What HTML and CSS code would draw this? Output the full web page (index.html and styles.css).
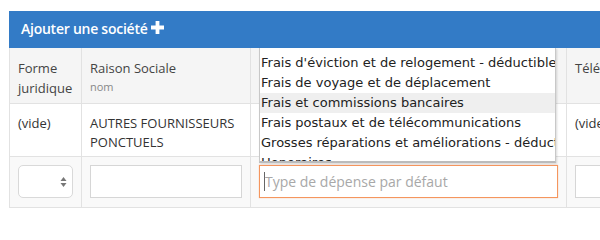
FILE: index.html
```html
<!DOCTYPE html>
<html lang="fr">
<head>
<meta charset="utf-8">
<link rel="stylesheet" href="styles.css">
</head>
<body>
<div class="panel">
  <div class="panel-head">Ajouter une société <svg class="plus" width="13" height="13" viewBox="0 0 13 13"><path d="M4.6 0h3.8v4.6H13v3.8H8.4V13H4.6V8.4H0V4.6h4.6z" fill="#fff"/></svg></div>
  <div class="table-wrap">
    <table class="grid">
      <colgroup>
        <col class="c1"><col class="c2"><col class="c3"><col class="c4">
      </colgroup>
      <thead>
        <tr>
          <th>Forme juridique</th>
          <th>Raison Sociale<span class="sub">nom</span></th>
          <th></th>
          <th>Téléphone</th>
        </tr>
      </thead>
      <tbody>
        <tr class="data">
          <td>(vide)</td>
          <td>AUTRES FOURNISSEURS PONCTUELS</td>
          <td></td>
          <td>(vide)</td>
        </tr>
        <tr class="edit">
          <td><div class="select"><span class="arrows"><svg width="7" height="12" viewBox="0 0 7 12"><path d="M3.5 1L6.5 5H0.5z M3.5 11L0.5 7H6.5z" fill="#777"/></svg></span></div></td>
          <td><div class="input"></div></td>
          <td><div class="input focus"><span class="caret"></span><span class="ph">Type de dépense par défaut</span></div></td>
          <td><div class="input"></div></td>
        </tr>
      </tbody>
    </table>
    <div class="dropdown">
      <div class="opt">Frais d'éviction et de relogement - déductible</div>
      <div class="opt">Frais de voyage et de déplacement</div>
      <div class="opt hl">Frais et commissions bancaires</div>
      <div class="opt">Frais postaux et de télécommunications</div>
      <div class="opt">Grosses réparations et améliorations - déductible</div>
      <div class="opt">Honoraires</div>
    </div>
  </div>
</div>
</body>
</html>
```

FILE: styles.css
```css
html, body {
  margin: 0;
  padding: 0;
  background: #fff;
  overflow: hidden;
}
body {
  width: 600px;
  height: 220px;
  font-family: "Open Sans", "DejaVu Sans", sans-serif;
  color: #333;
}
.panel {
  margin: 11px 0 0 9px;
  width: 700px;
}
.panel-head {
  background: #337bc6;
  color: #fff;
  height: 37px;
  box-sizing: border-box;
  padding: 0 0 2px 12px;
  font-size: 14px;
  font-weight: 600;
  letter-spacing: -0.25px;
  display: flex;
  align-items: center;
  line-height: 20px;
}
.plus {
  margin-left: 3px;
  margin-top: -3px;
}
.table-wrap {
  position: relative;
}
.grid {
  border-collapse: collapse;
  table-layout: fixed;
  width: 700px;
  font-size: 13px;
}
.c1 { width: 72px; }
.c2 { width: 169px; }
.c3 { width: 316px; }
.c4 { width: 143px; }
.grid th, .grid td {
  border: 1px solid #e2e2e2;
  padding: 0 8px;
  text-align: left;
  vertical-align: top;
  line-height: 19px;
}
.grid th {
  background: #f5f5f5;
  font-weight: 400;
  height: 55px;
  padding-top: 10px;
  line-height: 20px;
  box-sizing: border-box;
  color: #444;
}
.grid tr:first-child th { border-top: none; }
.sub {
  display: block;
  font-size: 11px;
  color: #888;
  margin-top: -1px;
}
.data td {
  height: 53px;
  box-sizing: border-box;
  padding-top: 10px;
  color: #333;
}
.edit td {
  background: #f9f9f9;
  height: 51px;
  box-sizing: border-box;
  padding-top: 8px;
}
.select {
  width: 55px;
  height: 33px;
  box-sizing: border-box;
  border: 1px solid #d9d9d9;
  border-radius: 5px;
  background: #fff;
  position: relative;
}
.arrows {
  position: absolute;
  right: 5px;
  top: 10px;
  line-height: 0;
}
.input {
  height: 33px;
  box-sizing: border-box;
  border: 1px solid #d6d6d6;
  background: #fff;
  display: flex;
  align-items: center;
}
.input.focus {
  border-color: #f5965e;
  box-shadow: 0 0 1px rgba(245, 150, 94, 0.6);
  padding-left: 4px;
}
.caret {
  width: 1px;
  height: 19px;
  background: #666;
}
.ph {
  color: #a8a8a8;
  font-size: 14px;
}
.dropdown {
  position: absolute;
  left: 250px;
  top: 0;
  width: 297px;
  height: 115px;
  box-sizing: border-box;
  background: #fff;
  border: 1px solid #c8c8c8;
  border-top: none;
  border-bottom: 2px solid #bbb;
  overflow: hidden;
  padding-top: 5px;
  font-family: "DejaVu Sans", sans-serif;
  font-size: 13px;
  color: #222;
  box-shadow: 1px 1px 2px rgba(0,0,0,0.15);
}
.opt {
  height: 20px;
  line-height: 20px;
  padding-left: 1px;
  white-space: nowrap;
  overflow: hidden;
}
.opt.hl { background: #efefef; }
```
